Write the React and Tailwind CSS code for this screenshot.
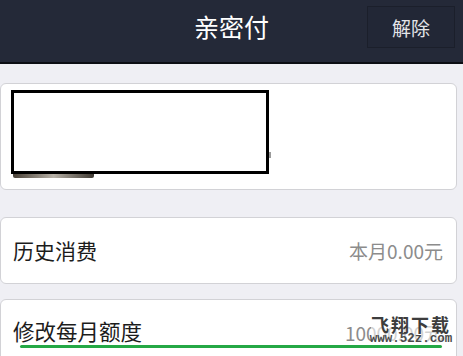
import React from "react";

const font = { fontFamily: '"Noto Sans CJK SC", "Noto Sans", sans-serif' };

const Header = () => {
  return (
    <header className="relative h-[64px] bg-[#242938] border-b-2 border-[#0c0e14] flex items-center justify-center">
      <h1 className="text-[25px] text-white leading-none -mt-[10px]">亲密付</h1>
      <button className="absolute right-[8px] top-[6px] w-[88px] h-[42px] border border-[#1b1f2b] bg-[#222736] text-[19px] text-[#e4e4e8] leading-none">
        解除
      </button>
    </header>
  );
};

const Row = ({ label, value }) => {
  return (
    <div className="relative mr-[6px] bg-white border border-[#d2d2d6] rounded-[6px] h-[67px] flex items-center justify-between pl-[12px] pr-[13px]">
      <span className="text-[21px] text-[#1c1c1c] leading-none">{label}</span>
      <span className="text-[19px] text-[#8c8c8c] leading-none">{value}</span>
    </div>
  );
};

const App = () => {
  return (
    <div className="w-[463px] h-[356px] overflow-hidden bg-[#efeff4]" style={font}>
      <Header />
      <div className="flex flex-col pt-[19px]">
        <div className="relative mr-[6px] bg-white border border-[#d2d2d6] rounded-[6px] h-[107px] pt-[6px] pl-[10px]">
          <div className="w-[258px] h-[84px] border-[3px] border-black bg-white" />
          <div className="ml-[2px] w-[81px] h-[4px] rounded-b-[2px] bg-gradient-to-r from-[#4a4238] via-[#b8b2a8] to-[#3f3a33]" />
          <div className="absolute left-[268px] top-[68px] w-[2px] h-[6px] bg-[#9a9a9a]" />
        </div>
        <div className="mt-[27px]">
          <Row label="历史消费" value="本月0.00元" />
        </div>
        <div className="mt-[15px]">
          <div className="relative mr-[6px] bg-white border border-[#d2d2d6] rounded-t-[6px] h-[70px] flex items-start justify-between pl-[12px] pr-[13px] pt-[20px]">
            <span className="text-[21.5px] text-[#1c1c1c] leading-none">修改每月额度</span>
            <span className="text-[19px] text-[#8c8c8c] leading-none mt-[3px]">10000.00元</span>
            <div className="absolute left-[19px] right-[14px] top-[45px] h-[3px] rounded-full bg-[#24a845]" />
            <div className="absolute left-[370px] top-[15px] w-[80px] flex flex-col items-center bg-white/60">
              <span className="text-[18px] font-bold text-[#3d3d3d] leading-[18px] tracking-[2px] whitespace-nowrap">飞翔下载</span>
              <span
                className="text-[12.5px] font-bold text-[#4a4a4a] leading-[12px] whitespace-nowrap"
                style={{ fontFamily: '"Liberation Mono", monospace' }}
              >
                www.52z.com
              </span>
            </div>
          </div>
        </div>
      </div>
    </div>
  );
};

export default App;
